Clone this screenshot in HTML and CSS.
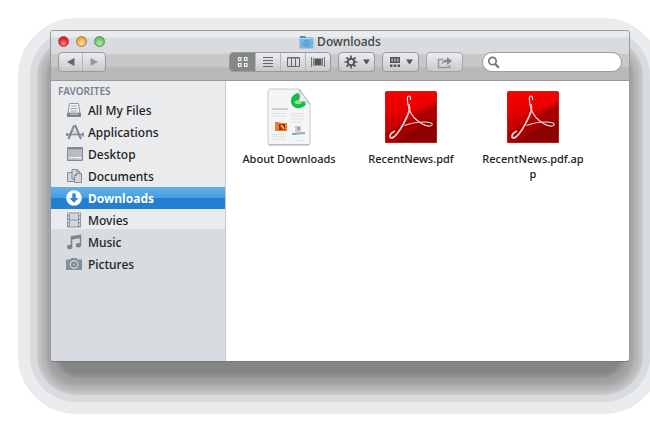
FILE: index.html
```html
<!DOCTYPE html>
<html lang="en">
<head>
<meta charset="utf-8">
<title>Downloads</title>
<link rel="stylesheet" href="styles.css">
</head>
<body>
<div class="stage">
<main class="window">
  <header class="chrome">
    <div class="titlebar">
      <div class="lights">
        <button class="light red" aria-label="Close"></button>
        <button class="light amber" aria-label="Minimize"></button>
        <button class="light green" aria-label="Zoom"></button>
      </div>
      <h1 class="title">
        <svg width="15" height="14" viewBox="0 0 15 14"><path d="M1 2.500V1h5l1 1.500h7V13H1z" fill="#4d8fbd"/><path d="M.5 3h14v10.500H.5z" fill="#75b7e2"/><path d="M1 3.500h13" stroke="#a9d8f3"/><circle cx="7.500" cy="8.500" r="3" fill="none" stroke="#4a96ca"/><path d="M7.500 6v4M6 8.500l1.500 1.500L9 8.500" fill="none" stroke="#4a96ca"/></svg>
        Downloads
      </h1>
      <span></span>
    </div>
    <div class="toolbar">
      <div class="nav">
        <div class="group">
          <button class="seg" aria-label="Back"><svg width="10" height="10" viewBox="0 0 10 10"><path d="M8.500 1v8L1 5z" fill="#666"/></svg></button>
          <button class="seg" aria-label="Forward"><svg width="10" height="10" viewBox="0 0 10 10"><path d="M1.500 1v8L9 5z" fill="#999"/></svg></button>
        </div>
      </div>
      <div class="group views">
        <button class="seg on" aria-label="Icon view"><svg width="12" height="12" viewBox="0 0 12 12" fill="none" stroke="#f4f4f4" stroke-width="1.200"><path d="M1.500 1.500h2.500v3H1.500zM7.500 1.500H10v3H7.500zM1.500 7.500h2.500v3H1.500zM7.500 7.500H10v3H7.500z"/><path d="M5 6h2" stroke="#4fc04f"/></svg></button>
        <button class="seg" aria-label="List view"><svg width="12" height="12" viewBox="0 0 12 12"><path d="M1 1.500h10M1 4.500h10M1 7.500h10M1 10.500h10" stroke="#666"/></svg></button>
        <button class="seg" aria-label="Column view"><svg width="13" height="12" viewBox="0 0 13 12"><path d="M.5 1.500h12v9H.5zM4.500 2v8M8.500 2v8" fill="none" stroke="#666"/><path d="M1 2h11" stroke="#666"/></svg></button>
        <button class="seg" aria-label="Cover view"><svg width="14" height="12" viewBox="0 0 14 12"><path d="M.5 1v10M2.500 2v8M11.500 2v8M13.500 1v10" stroke="#777"/><path d="M3.500 2.500h7v7h-7z" fill="#555"/></svg></button>
      </div>
      <button class="group tool" aria-label="Actions">
        <svg width="14" height="14" viewBox="0 0 14 14" fill="none" stroke="#555"><circle cx="7" cy="7" r="3.200" stroke-width="2"/><path d="M7 .5v3M7 10.500v3M.5 7h3M10.500 7h3M2.400 2.400l2 2M9.600 9.600l2 2M11.600 2.400l-2 2M4.400 9.600l-2 2" stroke-width="1.700"/></svg>
        <svg width="7" height="6" viewBox="0 0 7 6"><path d="M0 .5h7l-3.500 5z" fill="#555"/></svg>
      </button>
      <button class="group tool" aria-label="Arrange">
        <svg width="12" height="12" viewBox="0 0 12 12" fill="#555"><path d="M1 1h10v6H1z"/><path d="M1 8.500h2.500V11H1zM4.700 8.500h2.500V11H4.700zM8.500 8.500H11V11H8.500z"/><path d="M2.500 2.500h1.300v3H2.500zM5.400 2.500h1.300v3H5.400zM8.200 2.500h1.300v3H8.200z" fill="#c9c9c9"/></svg>
        <svg width="7" height="6" viewBox="0 0 7 6"><path d="M0 .5h7l-3.500 5z" fill="#555"/></svg>
      </button>
      <button class="group tool share" aria-label="Share">
        <svg width="16" height="13" viewBox="0 0 16 13"><path d="M6 3.500H1.500v8h11V9" fill="none" stroke="#999" stroke-width="1.400"/><path d="M4.500 8.500C5 5 7 3.600 10 3.600V1l5 4-5 4V6.400C7.500 6.200 6 6.800 4.500 8.500z" fill="#888"/></svg>
      </button>
      <label class="search">
        <svg width="13" height="13" viewBox="0 0 13 13" fill="none" stroke="#777"><circle cx="5.500" cy="5" r="3.700" stroke-width="1.700"/><path d="M8.200 8l3.600 3.800" stroke-width="2.200"/></svg>
        <input class="field" type="text" aria-label="Search">
      </label>
    </div>
  </header>
  <div class="body">
    <nav class="sidebar">
      <h2 class="heading">FAVORITES</h2>
      <a class="item" href="#"><svg width="16" height="16" viewBox="0 0 16 16"><path d="M3.500 1.500h9L14 11H2z" fill="#f5f6f7" stroke="#8d969f"/><path d="M5 4h6M4.500 6.500h7M4.500 9h7" stroke="#9aa3ac"/><path d="M1 11h14v4H1z" fill="#7b868f"/><path d="M4 12h8" stroke="#cfd4d8"/></svg>All My Files</a>
      <a class="item" href="#"><svg width="18" height="16" viewBox="0 0 18 16" fill="none" stroke="#7e8993"><path d="M8 1.500L2.500 15M9 1l6 14" stroke-width="2"/><path d="M1 10.500h16M1 12v-3M17 8.500v4" stroke-width="1.700"/><path d="M6 5l7 8" stroke="#aab2b9"/></svg>Applications</a>
      <a class="item" href="#"><svg width="18" height="16" viewBox="0 0 18 16"><path d="M1.500 1.500h15v13h-15z" fill="#b6bdc5" stroke="#828c96"/><path d="M2 2.500h14" stroke="#7e8892" stroke-width="1.500"/><path d="M3 13v-2h12v2z" fill="#eef0f2"/><path d="M4 12.500h1M6.500 12.500h1M9 12.500h1M11.500 12.500h1" stroke="#7e8892"/></svg>Desktop</a>
      <a class="item" href="#"><svg width="18" height="16" viewBox="0 0 18 16" fill="#d1d5da" stroke="#838d97"><path d="M1.500 4.500h7v9h-7z"/><path d="M6 1.500h5l3 2.500v7H6z"/><path d="M10.500 5.500h5v9h-7v-7z"/><path d="M11 1.500V4h3M10.500 5.500v2h-2" fill="none"/></svg>Documents</a>
      <a class="item current" href="#"><svg width="16" height="16" viewBox="0 0 16 16"><circle cx="8" cy="8" r="7.800" fill="#fff"/><path d="M6.300 3.500h3.400V8h2.800L8 12.800 3.500 8h2.800z" fill="#2c86d4"/></svg>Downloads</a>
      <a class="item" href="#"><svg width="16" height="16" viewBox="0 0 16 16"><path d="M1 .5h14v15H1z" fill="#8c969f"/><path d="M4 1.500h8v6H4zM4 8.500h8v6H4z" fill="#d2d6db"/><path d="M2.500 1v14M13.500 1v14" stroke="#e6e9eb" stroke-dasharray="2 1.500"/></svg>Movies</a>
      <a class="item" href="#"><svg width="16" height="16" viewBox="0 0 16 16"><path d="M5.500 12.500V3l9-1.500V11" fill="none" stroke="#7b8690" stroke-width="1.500"/><path d="M5 2.800l10-1.800v3L5 5.800z" fill="#7b8690"/><ellipse cx="3.700" cy="13" rx="2.700" ry="2.200" fill="#7b8690"/><ellipse cx="12.500" cy="11.200" rx="2.700" ry="2.200" fill="#7b8690"/></svg>Music</a>
      <a class="item" href="#"><svg width="16" height="14" viewBox="0 0 16 14"><path d="M0 2.500h4L5.500 1h5L12 2.500h4V13H0z" fill="#858f99"/><circle cx="8" cy="7.500" r="4.200" fill="#d9dde1"/><circle cx="8" cy="7.500" r="3" fill="#727d88"/><circle cx="8" cy="7.500" r="1.500" fill="#a9b1b9"/></svg>Pictures</a>
    </nav>
    <section class="files">
      <a class="file" href="#">
        <svg class="thumb" width="46" height="58" viewBox="0 0 46 58"><path d="M2 2.500Q2 1 3.500 1H33l11 15v39q0 1.500-1.500 1.500h-39Q2 56.500 2 55z" fill="#f4f5f6" stroke="#c6c9cc"/><path d="M2.500 57h41" stroke="#aaa"/><path d="M32 5C27 6 24.500 10 25 14c1 5 5 7 9 6 3-.5 5-2 6-4z" fill="#14bd48"/><path d="M28 14c2 3 6 3 9 0l-6-2z" fill="#88e49b"/><path d="M33 1l11 15c-4-3-7-3-12-2 2-4 3-8 1-13z" fill="#eee" stroke="#aaa" stroke-width=".8"/><path d="M6 21h16" stroke="#aaa"/><path d="M6 25.500h15M6 28h15M25 25.500h13M25 28h13M25 31h13M25 34h10M6 46.500h14M6 49h14M6 51.500h14M31 52.500h8" stroke="#dfe1e4"/><path d="M9 34h4l1 1h7v8H9z" fill="#ef8124"/><path d="M13 36h6v6h-6z" fill="#a72918"/><path d="M15 37l3 4" stroke="#f4c144" stroke-width="2"/><path d="M29 38h6v6h-6z" fill="#ccd0d8"/><path d="M31 39h3v3h-3z" fill="#d98c80"/><path d="M26 46l13-1" stroke="#96a9bb" stroke-width="2"/><path d="M26 46h4" stroke="#6eafd5" stroke-width="2"/></svg>
        <span class="name">About Downloads</span>
      </a>
      <a class="file" href="#">
        <svg class="thumb" width="52" height="52" viewBox="0 0 52 52"><use href="#acrobat"/></svg>
        <span class="name">RecentNews.pdf</span>
      </a>
      <a class="file" href="#">
        <svg class="thumb" width="52" height="52" viewBox="0 0 52 52"><use href="#acrobat"/></svg>
        <span class="name">RecentNews.pdf.app</span>
      </a>
    </section>
  </div>
</main>
</div>
<svg class="defs" width="0" height="0">
  <defs>
    <linearGradient id="red" x1="0" y1="0" x2="0" y2="1"><stop offset="0" stop-color="#f80000"/><stop offset=".4" stop-color="#e40000"/><stop offset="1" stop-color="#b60000"/></linearGradient>
    <clipPath id="tile"><rect width="52" height="52" rx="2"/></clipPath>
    <g id="acrobat" clip-path="url(#tile)">
      <rect width="52" height="52" fill="url(#red)"/>
      <path d="M0 29C18 26 36 20 52 9v43H0z" fill="#c80000"/>
      <path d="M0 42C14 36 24 26 52 14v38H0z" fill="#a80000"/>
      <path d="M8 52C24 42 34 34 52 28v24z" fill="#8c0000"/>
      <path d="M25.500 9c.6-4.500-3-5.500-3.200-1.500-.1 3.500 1 8 2.200 11.500 2 5.500 7 10.500 12 13.500 4 2.500 9 3.500 10.500 1.500 1-2-3-3-8-3-6 0-13 1-19.500 3.500" fill="none" stroke="#f1d9d9" stroke-width="1.200"/>
      <path d="M24 13c.6 3 .6 5 .2 7C22 27 16 38 11.500 43.500 9 46.500 6 48 5 46c-.6-2 2-5 5-6" fill="none" stroke="#f1d9d9" stroke-width="1.700"/>
      <rect x=".5" y=".5" width="51" height="51" rx="2" fill="none" stroke="#c22" stroke-opacity=".7"/>
    </g>
  </defs>
</svg>
</body>
</html>
```
FILE: styles.css
```css
* { box-sizing: border-box; }

body {
  margin: 0;
  padding: 30px 20px 72px 50px;
  background: #fff;
  font-family: "Lucida Grande", "Noto Sans", sans-serif;
  font-size: 12px;
  color: #222;
}

button {
  margin: 0;
  padding: 0;
  border: 0;
  background: none;
  font: inherit;
}

a { color: inherit; text-decoration: none; }
h1, h2 { margin: 0; }
svg { display: block; flex: none; }
.defs { position: absolute; }

/* Stepped shadow under the window */
.stage { position: relative; isolation: isolate; }

.stage::before,
.stage::after {
  content: "";
  position: absolute;
  z-index: -1;
}

.stage::before {
  inset: 20px 0 -20px;
  border-radius: 26px;
  background: #a0a0a2;
  box-shadow:
    0 0 0 2px #a4a4a8,
    0 0 0 4px #a9a9ac,
    0 0 0 6px #b2b2b2,
    0 0 0 9px #b9b9b9,
    0 0 0 11px #c2c2c2,
    0 0 0 13px #c9c9c9,
    0 0 0 20px #d8dbe0,
    0 0 0 32px #e9ebed;
}

.stage::after {
  inset: 11px 10px -11px;
  border-radius: 18px;
  background: #848684;
  box-shadow:
    0 0 0 2px #888a88,
    0 0 0 4px #909291,
    0 0 0 6px #989a99;
}

.window {
  border: 1px solid #999b9c;
  border-bottom-color: #777;
  border-radius: 4px;
  background: #fff;
  overflow: hidden;
}

.chrome {
  display: flex;
  flex-direction: column;
  height: 50px;
  border-bottom: 1px solid #98989c;
  background: linear-gradient(#e9ebed 6px, #d8dbe0 7px 22px, #c8c8c8 24px 35px, #b8b8b8 37px);
}

.titlebar {
  display: grid;
  grid-template-columns: 1fr auto 1fr;
  align-items: center;
  height: 21px;
  padding: 0 7px;
}

.lights { display: flex; gap: 7px; }

.light {
  width: 11px;
  height: 11px;
  border: 1px solid;
  border-radius: 50%;
}
.red { border-color: #a4484a; background: radial-gradient(circle at 50% 70%, #ff8d8d, #e02026 60%); }
.amber { border-color: #a87a45; background: radial-gradient(circle at 50% 70%, #ffe69a, #eaa23c 70%); }
.green { border-color: #5c8e5c; background: radial-gradient(circle at 50% 70%, #b4f0ad, #5cbf5c 70%); }

.title {
  display: flex;
  align-items: center;
  gap: 3px;
  font-size: 12px;
  font-weight: 500;
  line-height: 20px;
  color: #444;
}

.toolbar {
  display: flex;
  gap: 7px;
  padding: 0 7px;
}

.nav { display: flex; width: 164px; }

.group {
  display: flex;
  height: 20px;
  border: 1px solid #999;
  border-radius: 4px;
  background: linear-gradient(#ededee, #d9dbde 50%, #c9c9c9);
}

.seg {
  display: grid;
  place-items: center;
  width: 23px;
}
.seg + .seg { border-left: 1px solid #b5b5b7; }
.views .seg { width: 25px; }
.views .on { border-radius: 3px 0 0 3px; background: #858786; }

.tool {
  align-items: center;
  justify-content: center;
  gap: 5px;
  width: 37px;
}
.share { border-color: #a5a5a5; }

.search {
  display: flex;
  align-items: center;
  width: 140px;
  height: 20px;
  margin-left: auto;
  padding: 0 4px;
  border: 1px solid #9b9b9b;
  border-radius: 10px;
  background: #fff;
}

.field {
  flex: 1;
  min-width: 0;
  border: 0;
  outline: 0;
  background: none;
  font: inherit;
}

.body { display: flex; min-height: 280px; }

.sidebar {
  flex: none;
  width: 175px;
  border-right: 1px solid #c8c8cc;
  background: linear-gradient(#e9ebed 148px, #d8dbe0 148px);
}

.heading {
  padding: 3px 7px 0;
  font-size: 10px;
  font-weight: 600;
  line-height: 15px;
  color: #76828f;
}

.item {
  display: grid;
  grid-template-columns: 18px 1fr;
  align-items: center;
  gap: 4px;
  height: 22px;
  padding-left: 15px;
  font-weight: 500;
}

.current {
  background: linear-gradient(#64b0e8, #459fdf 50%, #2380d0 51%);
  font-weight: 700;
  color: #fff;
}

.files {
  display: flex;
  flex-wrap: wrap;
  align-items: flex-start;
  align-content: flex-start;
  flex: 1;
  padding: 7px 0 0 2px;
}

.file {
  display: grid;
  grid-template-rows: 58px auto;
  justify-items: center;
  align-items: center;
  gap: 5px;
  width: 122px;
}

.name {
  max-width: 104px;
  font-weight: 500;
  font-size: 11px;
  line-height: 15px;
  text-align: center;
  word-break: break-all;
}
```
